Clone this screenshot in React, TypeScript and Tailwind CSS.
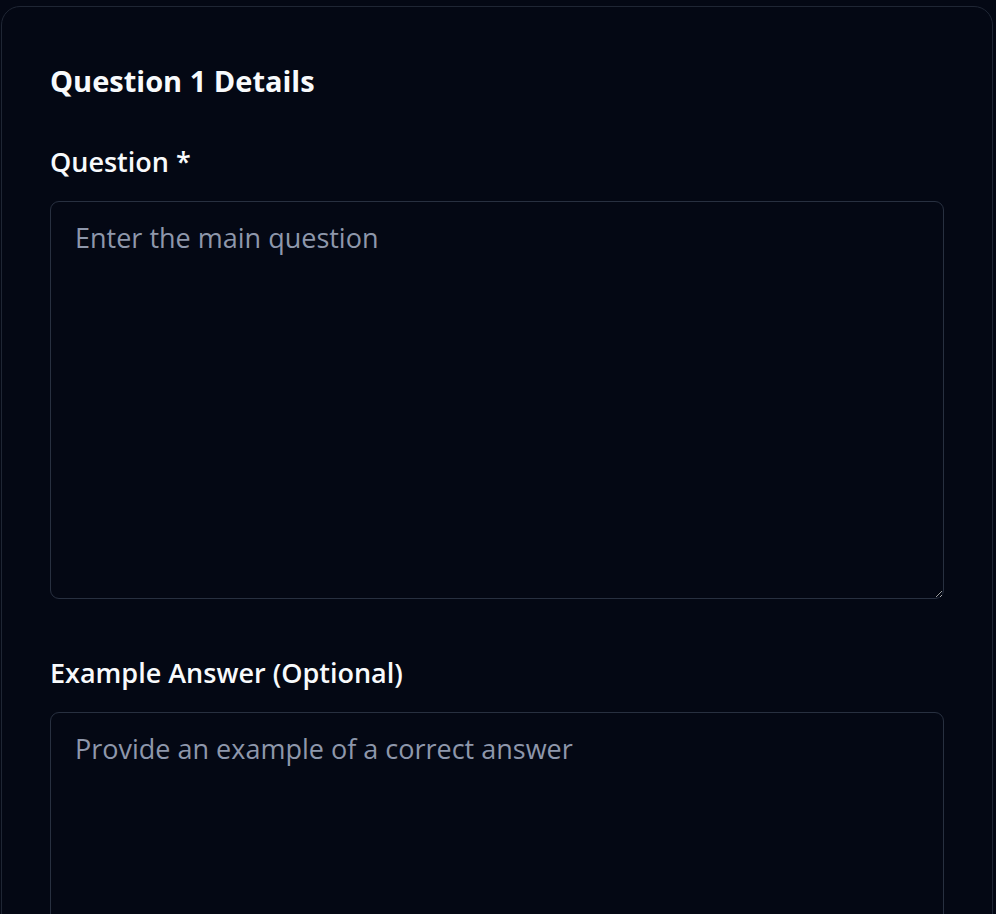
import React from "react";

export default function App() {
  return (
    <div
      className="h-[914px] w-full overflow-hidden bg-[#040814] text-[#f8fafc]"
      style={{ fontFamily: '"Open Sans", "Noto Sans", sans-serif' }}
    >
      <div className="ml-[1px] mt-[6px] w-[992px] rounded-[19px] border border-[#1f2634] bg-[#040814] px-[48px] pt-[53px] pb-[48px]">
        <h2 className="m-0 text-[29px] font-bold leading-[42px] text-[#f8fafc]">
          Question 1 Details
        </h2>

        <div className="mt-[40px] flex flex-col">
          <label className="text-[27px] font-semibold leading-[40px] text-[#f8fafc]">
            Question *
          </label>
          <textarea
            className="mt-[19px] block h-[398px] w-full resize-y rounded-[9px] border border-[#283040] bg-transparent px-[24px] pt-[16px] pb-[12px] text-[27px] leading-[40px] text-[#f8fafc] outline-none placeholder:text-[#8e97ab]"
            placeholder="Enter the main question"
          />
        </div>

        <div className="mt-[54px] flex flex-col">
          <label className="text-[27px] font-semibold leading-[40px] text-[#f8fafc]">
            Example Answer (Optional)
          </label>
          <textarea
            className="mt-[19px] block h-[398px] w-full resize-y rounded-[9px] border border-[#283040] bg-transparent px-[24px] pt-[16px] pb-[12px] text-[27px] leading-[40px] text-[#f8fafc] outline-none placeholder:text-[#8e97ab]"
            placeholder="Provide an example of a correct answer"
          />
        </div>
      </div>
    </div>
  );
}
